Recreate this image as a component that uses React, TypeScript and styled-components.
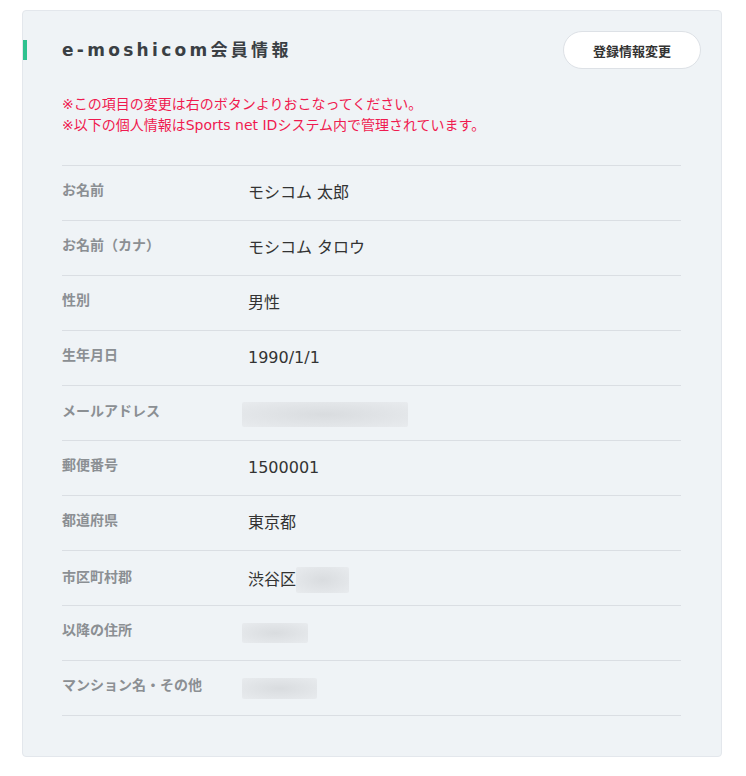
import React from "react";
import styled, { createGlobalStyle } from "styled-components";

const Global = createGlobalStyle`
  html, body { margin: 0; padding: 0; background: #fff; }
  body { font-family: "DejaVu Sans", "Noto Sans CJK JP", sans-serif; color: #333; }
`;

const Page = styled.div`
  padding: 10px 24px 20px 22px;
`;

const Card = styled.section`
  background: #eff3f6;
  border: 1px solid #e3e7ec;
  border-radius: 4px;
  padding: 20px 20px 40px 0;
`;

const Header = styled.div`
  display: flex;
  align-items: center;
  justify-content: space-between;
`;

const Title = styled.h2`
  margin: 0;
  position: relative;
  padding-left: 39px;
  font-size: 17px;
  font-weight: 700;
  letter-spacing: 3.3px;
  color: #3a3f44;
  line-height: 24px;
  &::before {
    content: "";
    position: absolute;
    left: 0;
    top: 2px;
    width: 4px;
    height: 20px;
    background: #2ec28f;
  }
`;

const EditButton = styled.button`
  width: 138px;
  height: 38px;
  border-radius: 19px;
  border: 1px solid #dde1e6;
  background: #fff;
  font-family: "Noto Sans CJK JP", sans-serif;
  font-size: 13px;
  font-weight: 700;
  color: #333;
  cursor: pointer;
`;

const Notes = styled.div`
  margin: 25px 0 0 39px;
  color: #ef1a4f;
  font-size: 14px;
  line-height: 21px;
`;

const Table = styled.dl`
  margin: 29px 20px 0 39px;
  border-top: 1px solid #dadee3;
`;

const Row = styled.div`
  display: grid;
  grid-template-columns: 186px 1fr;
  align-items: center;
  padding: 16px 0;
  border-bottom: 1px solid #dadee3;
  height: 22px;
`;

const Label = styled.dt`
  font-size: 14px;
  font-weight: 700;
  color: #8b8f93;
  line-height: 18px;
  margin-top: -7px;
`;

const Value = styled.dd`
  margin: 0;
  font-size: 16px;
  line-height: 22px;
  color: #333;
  display: flex;
  align-items: center;
`;

const Masked = styled.span<{ $w: number; $h: number; $offset?: number }>`
  display: inline-block;
  width: ${(p) => p.$w}px;
  height: ${(p) => p.$h}px;
  margin-left: ${(p) => p.$offset ?? 0}px;
  background: radial-gradient(ellipse at center, #d9dcdf 0%, #e2e5e8 60%, #e8ebee 100%);
  border-radius: 2px;
`;

type Item = { label: string; value?: string; mask?: { w: number; h: number; offset?: number } };

const items: Item[] = [
  { label: "お名前", value: "モシコム 太郎" },
  { label: "お名前（カナ）", value: "モシコム タロウ" },
  { label: "性別", value: "男性" },
  { label: "生年月日", value: "1990/1/1" },
  { label: "メールアドレス", mask: { w: 166, h: 25, offset: -6 } },
  { label: "郵便番号", value: "1500001" },
  { label: "都道府県", value: "東京都" },
  { label: "市区町村郡", value: "渋谷区", mask: { w: 53, h: 26 } },
  { label: "以降の住所", mask: { w: 66, h: 20, offset: -6 } },
  { label: "マンション名・その他", mask: { w: 75, h: 21, offset: -6 } },
];

export default function App() {
  return (
    <Page>
      <Global />
      <Card>
        <Header>
          <Title>e-moshicom会員情報</Title>
          <EditButton>登録情報変更</EditButton>
        </Header>
        <Notes>
          <div>※この項目の変更は右のボタンよりおこなってください。</div>
          <div>※以下の個人情報はSports net IDシステム内で管理されています。</div>
        </Notes>
        <Table>
          {items.map((it) => (
            <Row key={it.label}>
              <Label>{it.label}</Label>
              <Value>
                {it.value}
                {it.mask && <Masked $w={it.mask.w} $h={it.mask.h} $offset={it.mask.offset} />}
              </Value>
            </Row>
          ))}
        </Table>
      </Card>
    </Page>
  );
}
